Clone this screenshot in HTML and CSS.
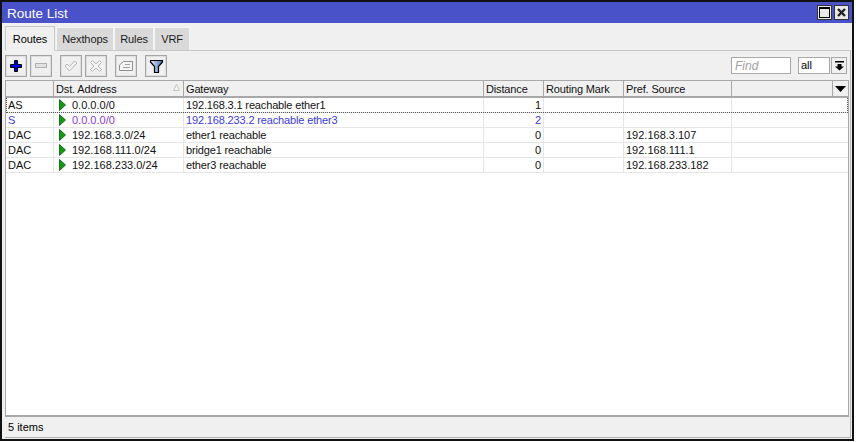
FILE: index.html
```html
<!DOCTYPE html>
<html lang="en">
<head>
<meta charset="utf-8">
<title>Route List</title>
<link rel="stylesheet" href="styles.css">
</head>
<body>
<div class="window">
  <header class="titlebar">
    <span class="title">Route List</span>
    <div class="win-btns">
      <button class="win-btn"><svg width="13" height="13" viewBox="0 0 13 13"><rect x="1.500" y="1.500" width="10" height="10" fill="none" stroke="#000" stroke-width="1"/><path d="M1 2h11" stroke="#000" stroke-width="2"/></svg></button>
      <button class="win-btn"><svg width="13" height="13" viewBox="0 0 13 13"><path d="M3 3l7 7M10 3l-7 7" stroke="#222" stroke-width="2.400"/></svg></button>
    </div>
  </header>
  <div class="body">
    <nav class="tabs">
      <div class="tab active">Routes</div>
      <div class="tab t-next">Nexthops</div>
      <div class="tab t-rules">Rules</div>
      <div class="tab t-vrf">VRF</div>
    </nav>
    <div class="panel">
      <div class="toolbar">
        <button class="tool"><svg width="14" height="14" viewBox="0 0 14 14"><path d="M5.500 1.500h3v4h4v3h-4v4h-3v-4h-4v-3h4z" fill="#0000e6" stroke="#000" stroke-width="1"/></svg></button>
        <button class="tool gap-s"><svg width="14" height="14" viewBox="0 0 14 14"><rect x="1.500" y="4.500" width="11" height="4" fill="#e2e2e2" stroke="#b0b0b0"/></svg></button>
        <button class="tool gap-l"><svg width="14" height="14" viewBox="0 0 14 14"><path d="M1 7l2-2 2.500 2.500L10.500 2 13 4l-7.500 8z" fill="#f4f4f4" stroke="#b4b4b4"/></svg></button>
        <button class="tool gap-s"><svg width="14" height="14" viewBox="0 0 14 14"><path d="M1.500 3.500l2-2L7 5l3.500-3.500 2 2L9 7l3.500 3.500-2 2L7 9l-3.500 3.500-2-2L5 7z" fill="#f4f4f4" stroke="#b4b4b4"/></svg></button>
        <button class="tool gap-l"><svg width="16" height="14" viewBox="0 0 16 14"><path d="M5.500 2.500h9v9H1.500V6z" fill="#f4f4f4" stroke="#909090"/><path d="M7 5.500h5M5 8.500h7" stroke="#a0a0a0"/></svg></button>
        <button class="tool gap-l"><svg width="15" height="15" viewBox="0 0 15 15"><defs><linearGradient id="fg" x1="0" x2="1" y1="0" y2="0"><stop offset="0" stop-color="#e2eaf8"/><stop offset="1" stop-color="#4a70b8"/></linearGradient></defs><path d="M1.500 1.500h12v1.500l-4 4.500v6h-4v-6l-4-4.500z" fill="url(#fg)" stroke="#000" stroke-width="1.200"/></svg></button>
        <div class="tool-right">
          <input class="find" type="text" placeholder="Find">
          <div class="combo"><span class="combo-val">all</span></div>
          <button class="combo-btn"><svg width="11" height="11" viewBox="0 0 11 11"><path d="M1 1h9v1.500H1zM3.500 4h4v2.500h2.500L5.500 10.500 1 6.500h2.500z" fill="#000"/></svg></button>
        </div>
      </div>
      <div class="grid">
        <div class="row head">
          <div class="cell"></div>
          <div class="cell sorted">Dst. Address<svg class="sort" width="7" height="7" viewBox="0 0 7 7"><path d="M3.500 .5L6.500 6.500H.5z" fill="#f4f4f4" stroke="#c4c4c4"/></svg></div>
          <div class="cell">Gateway</div>
          <div class="cell">Distance</div>
          <div class="cell">Routing Mark</div>
          <div class="cell">Pref. Source</div>
          <div class="cell"></div>
          <div class="cell menu"><svg width="11" height="6" viewBox="0 0 11 6"><path d="M0 0h11L5.500 6z" fill="#000"/></svg></div>
        </div>
        <div class="row item focus">
          <div class="cell">AS</div>
          <div class="cell addr"><svg class="flag" width="7" height="12" viewBox="0 0 7 12"><path d="M.5 .5L6.500 6 .5 11.500z" fill="#119a11" stroke="#0a520a" stroke-width=".8"/></svg>0.0.0.0/0</div>
          <div class="cell word">192.168.3.1 reachable ether1</div>
          <div class="cell num">1</div>
          <div class="cell"></div>
          <div class="cell"></div>
          <div class="cell fill"></div>
        </div>
        <div class="row item static">
          <div class="cell">S</div>
          <div class="cell addr"><svg class="flag" width="7" height="12" viewBox="0 0 7 12"><path d="M.5 .5L6.500 6 .5 11.500z" fill="#119a11" stroke="#0a520a" stroke-width=".8"/></svg><span class="purple">0.0.0.0/0</span></div>
          <div class="cell word">192.168.233.2 reachable ether3</div>
          <div class="cell num">2</div>
          <div class="cell"></div>
          <div class="cell"></div>
          <div class="cell fill"></div>
        </div>
        <div class="row item">
          <div class="cell">DAC</div>
          <div class="cell addr"><svg class="flag" width="7" height="12" viewBox="0 0 7 12"><path d="M.5 .5L6.500 6 .5 11.500z" fill="#119a11" stroke="#0a520a" stroke-width=".8"/></svg>192.168.3.0/24</div>
          <div class="cell word">ether1 reachable</div>
          <div class="cell num">0</div>
          <div class="cell"></div>
          <div class="cell">192.168.3.107</div>
          <div class="cell fill"></div>
        </div>
        <div class="row item">
          <div class="cell">DAC</div>
          <div class="cell addr"><svg class="flag" width="7" height="12" viewBox="0 0 7 12"><path d="M.5 .5L6.500 6 .5 11.500z" fill="#119a11" stroke="#0a520a" stroke-width=".8"/></svg>192.168.111.0/24</div>
          <div class="cell word">bridge1 reachable</div>
          <div class="cell num">0</div>
          <div class="cell"></div>
          <div class="cell">192.168.111.1</div>
          <div class="cell fill"></div>
        </div>
        <div class="row item">
          <div class="cell">DAC</div>
          <div class="cell addr"><svg class="flag" width="7" height="12" viewBox="0 0 7 12"><path d="M.5 .5L6.500 6 .5 11.500z" fill="#119a11" stroke="#0a520a" stroke-width=".8"/></svg>192.168.233.0/24</div>
          <div class="cell word">ether3 reachable</div>
          <div class="cell num">0</div>
          <div class="cell"></div>
          <div class="cell">192.168.233.182</div>
          <div class="cell fill"></div>
        </div>
      </div>
      <div class="status">5 items</div>
    </div>
  </div>
</div>
</body>
</html>
```

FILE: styles.css
```css
* { box-sizing: border-box; }
html, body { margin: 0; padding: 0; }
body { width: 856px; height: 442px; background: #fff; font: 11px "Liberation Sans", Arial, sans-serif; color: #000; overflow: hidden; }
button { padding: 0; margin: 0; font: inherit; }

.window { width: 854px; height: 441px; border: 2px solid #111; background: #f0f0f0; display: flex; flex-direction: column; }

.titlebar { height: 21px; flex: none; background: #4a52c9; color: #fff; display: flex; align-items: center; justify-content: space-between; padding: 0 3px 0 5px; }
.title { font-size: 13.500px; padding-top: 2px; }
.win-btns { display: flex; gap: 2px; }
.win-btn { width: 15px; height: 15px; border: 1px solid #333; background: #e8e8e8; display: flex; }

.body { flex: 1; min-height: 0; display: flex; flex-direction: column; padding: 2px 1px 1px 3px; }
.tabs { height: 25px; flex: none; display: flex; align-items: flex-end; position: relative; z-index: 1; }
.tab { height: 23px; padding-top: 5px; text-align: center; background: #d9d9d9; border: 1px solid #f4f4f4; border-bottom: 0; color: #1a1a1a; font-size: 11px; letter-spacing: -.1px; }
.tab.active { width: 50px; height: 25px; background: #f0f0f0; border-color: #c8c8c8; border-bottom: 1px solid #f0f0f0; color: #000; padding-top: 6px; margin-bottom: -1px; }
.t-next { width: 58px; margin-left: 1px; }
.t-rules { width: 40px; }
.t-vrf { width: 36px; }

.panel { flex: 1; min-height: 0; display: flex; flex-direction: column; border-top: 1px solid #c8c8c8; border-right: 1px solid #b8b8b8; border-bottom: 1px solid #b0b0b0; padding-right: 1px; }

.toolbar { height: 29px; flex: none; display: flex; align-items: flex-start; padding-top: 4px; }
.tool { width: 22px; height: 22px; border: 1px solid #a4a4a4; background: #f0f0f0; display: flex; align-items: center; justify-content: center; box-shadow: inset 0 0 0 1px #dedede; }
.gap-s { margin-left: 3px; }
.gap-l { margin-left: 8px; }
.tool-right { margin-left: auto; display: flex; padding-top: 2px; padding-right: 2px; }
.find { width: 60px; height: 17px; border: 1px solid #a8a8a8; background: #fff; padding: 0 3px; font: italic 12px "Liberation Sans", Arial, sans-serif; outline: 0; }
.find::placeholder { color: #a0a0a0; opacity: 1; }
.combo { width: 32px; height: 17px; margin-left: 7px; border: 1px solid #a8a8a8; background: #fff; padding: 1px 2px; }
.combo-btn { width: 16px; height: 17px; margin-left: 1px; border: 1px solid #a8a8a8; background: #f0f0f0; display: flex; align-items: center; justify-content: center; }

.grid { flex: 1; min-height: 0; background: #fff; border: 1px solid #a8a8a8; border-bottom-width: 2px; }
.row { display: grid; grid-template-columns: 48px 130px 300px 60px 80px 108px 101px 15px; }
.head { height: 17px; background: #f0f0f0; border-bottom: 2px solid #a8a8a8; }
.head .cell { border-right: 1px solid #a8a8a8; padding: 1px 2px; position: relative; line-height: 14px; color: #111; letter-spacing: -.15px; }
.head .cell:last-child { border-right: 0; display: flex; align-items: center; justify-content: center; padding: 0; }
.sort { position: absolute; right: 3px; top: 3px; }
.item { height: 15px; border-bottom: 1px solid #e6e6e6; }
.item .cell { border-right: 1px solid #e6e6e6; padding: 0 2px; line-height: 14px; white-space: nowrap; overflow: hidden; color: #111; }
.item .fill { grid-column: span 2; border-right: 0; }
.item .word { letter-spacing: -.15px; }
.item .num { text-align: right; }
.item .addr { display: flex; align-items: center; padding-left: 5px; }
.flag { margin-right: 6px; flex: none; }
.item.static .cell { color: #3a3adf; }
.item.static .purple { color: #8a3adf; }
.focus { position: relative; }
.focus::after { content: ""; position: absolute; inset: 0 0 -1px; border: 1px dotted #555; border-top: 0; pointer-events: none; }

.status { height: 20px; flex: none; padding: 3px 3px; line-height: 14px; }
```
